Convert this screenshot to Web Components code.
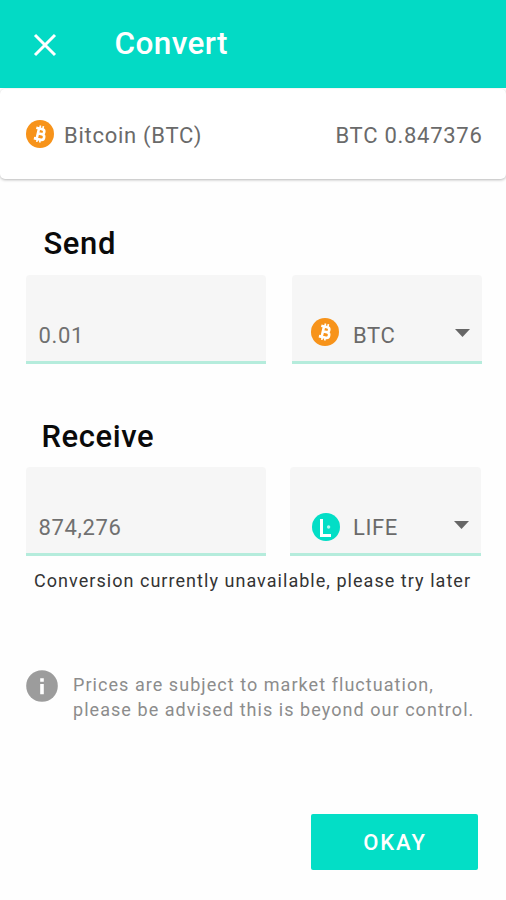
<!DOCTYPE html>
<html lang="en">
<head>
<meta charset="utf-8">
<title>Convert</title>
<style>
  html, body { margin: 0; background: #fefefe; }
  body { font-family: Roboto, "Liberation Sans", sans-serif; }
</style>
</head>
<body>
<convert-screen></convert-screen>
<script>
function define(name, html) {
  const tpl = document.createElement('template');
  tpl.innerHTML = html;
  customElements.define(name, class extends HTMLElement {
    constructor() {
      super();
      this.attachShadow({ mode: 'open' }).appendChild(tpl.content.cloneNode(true));
    }
  });
}

define('close-icon', `
<style>:host{display:block;width:24px;height:24px}svg{display:block}</style>
<svg width="24" height="24" viewBox="0 0 24 24"><path d="M2 2 22 22M22 2 2 22" stroke="#fff" stroke-width="3" fill="none"/></svg>`);

define('btc-icon', `
<style>:host{display:block;flex:none;width:28px;height:28px}svg{display:block}</style>
<svg width="28" height="28" viewBox="0 0 28 28"><circle cx="14" cy="14" r="14" fill="#f7931a"/>
<g transform="rotate(13 14 14)" fill="none" stroke="#fff" stroke-width="2.6">
<path d="M9 8.8h6.2a2.5 2.5 0 0 1 0 5H11.4M11.4 13.8h4.6a2.8 2.8 0 0 1 0 5.6H9M11.8 8.8v10.6"/>
<path d="M12.6 5.6v3M15.6 5.6v3M12.6 19.4v3M15.6 19.4v3" stroke-width="1.7"/></g></svg>`);

define('life-icon', `
<style>:host{display:block;flex:none;width:28px;height:28px}svg{display:block}</style>
<svg width="28" height="28" viewBox="0 0 28 28"><circle cx="14" cy="14" r="14" fill="#03dec6"/>
<path d="M9.5 6v16.4H19" fill="none" stroke="#fff" stroke-width="3"/><circle cx="16.6" cy="14" r="1.7" fill="#b9f5ed"/></svg>`);

define('info-icon', `
<style>:host{display:block;flex:none;width:32px;height:32px}svg{display:block}</style>
<svg width="32" height="32" viewBox="0 0 32 32"><circle cx="16" cy="16" r="15.8" fill="#9c9c9c"/><path d="M14.2 8.2h3.6v3.6h-3.6zM14.2 14h3.6v10.3h-3.6z" fill="#fff"/></svg>`);

define('app-bar', `
<style>:host{display:flex;align-items:center;height:88px;box-sizing:border-box;padding-left:33px;gap:57.5px;background:#03dac5;color:#fff}
.title{font-size:31.5px;font-weight:500;line-height:36px;letter-spacing:.4px}close-icon{margin-top:2px}</style>
<close-icon></close-icon><div class="title"><slot></slot></div>`);

define('balance-card', `
<style>:host{display:flex;align-items:center;height:90px;box-sizing:border-box;padding:0 24px 0 26px;background:#fff;color:#6a6a6a;border-radius:5px;box-shadow:0 1px 3px rgba(0,0,0,.28);font-size:22px;line-height:28px;position:relative}
.name{margin-left:10px;flex:1;letter-spacing:.72px}.amount{letter-spacing:.72px;margin-right:-.5px}.name,.amount{margin-top:4px}</style>
<btc-icon></btc-icon><div class="name"><slot name="name"></slot></div><div class="amount"><slot name="amount"></slot></div>`);

define('section-title', `
<style>:host{display:block;font-size:31px;font-weight:500;line-height:36px;height:36px;color:#0a0a0a;letter-spacing:.6px}</style><slot></slot>`);

define('value-field', `
<style>:host{display:flex;align-items:flex-end;box-sizing:border-box;height:89px;background:#f6f6f6;border-bottom:3px solid #b5ecdc;border-radius:4px 4px 0 0;padding:0 0 11px 12.5px;color:#707070;font-size:22px;line-height:28px;letter-spacing:.65px}</style><slot></slot>`);

define('currency-select', `
<style>:host{display:flex;align-items:flex-end;box-sizing:border-box;height:89px;background:#f6f6f6;border-bottom:3px solid #b5ecdc;border-radius:4px 4px 0 0;padding:0 12px 11px 19px;color:#6a6a6a;font-size:22px;line-height:28px}
.label{flex:1;margin-left:var(--label-gap,14.5px)}.coin{margin-bottom:var(--coin-lift,4px)}svg{display:block;margin-bottom:13px}</style>
<div class="coin"><slot name="coin"></slot></div><div class="label"><slot></slot></div>
<svg width="15" height="8" viewBox="0 0 15 8"><path d="M0 0h15L7.5 8z" fill="#666"/></svg>`);

define('info-note', `
<style>:host{display:flex;gap:15px;color:#8c8c8c;font-size:18px;line-height:25px}.text{margin-top:2px}</style>
<info-icon></info-icon><div class="text"><slot></slot></div>`);

define('action-button', `
<style>:host{display:flex;justify-content:center;align-items:center;box-sizing:border-box;width:167px;height:56px;padding:2px 0 0 1px;border-radius:2px;background:#03dec6;color:#fff;font-size:22px;font-weight:500;letter-spacing:1.9px}</style><slot></slot>`);

define('convert-screen', `
<style>
:host{display:flex;flex-direction:column;height:900px;overflow:hidden;background:#fefefe}
balance-card{margin-top:.5px}
.send-title{margin:47px 0 0 43.5px}
.recv-title{margin:55px 0 0 41.5px}
.row{display:grid;grid-template-columns:240px 190px;justify-content:space-between;margin:13.5px 24.5px 0 26px}
.row.recv{grid-template-columns:240px 191px;margin:12px 25px 0 26px}
.recv currency-select{--coin-lift:1px;--label-gap:13px;padding-left:22px}
.helper{margin:11.5px 0 0 34px;font-size:18px;line-height:26px;color:#333;white-space:nowrap;letter-spacing:1.04px}
info-note{margin:76.5px 0 0 26px;white-space:nowrap;letter-spacing:1.05px}
action-button{margin:91.5px 28px 0 0;align-self:flex-end}
</style>
<app-bar>Convert</app-bar>
<balance-card><span slot="name">Bitcoin (BTC)</span><span slot="amount">BTC 0.847376</span></balance-card>
<section-title class="send-title">Send</section-title>
<div class="row"><value-field>0.01</value-field><currency-select><btc-icon slot="coin"></btc-icon><span style="letter-spacing:.6px">BTC</span></currency-select></div>
<section-title class="recv-title">Receive</section-title>
<div class="row recv"><value-field>874,276</value-field><currency-select><life-icon slot="coin"></life-icon><span style="letter-spacing:.6px">LIFE</span></currency-select></div>
<div class="helper">Conversion currently unavailable, please try later</div>
<info-note>Prices are subject to market fluctuation,<br>please be advised this is beyond our control.</info-note>
<action-button>OKAY</action-button>`);
</script>
</body>
</html>
